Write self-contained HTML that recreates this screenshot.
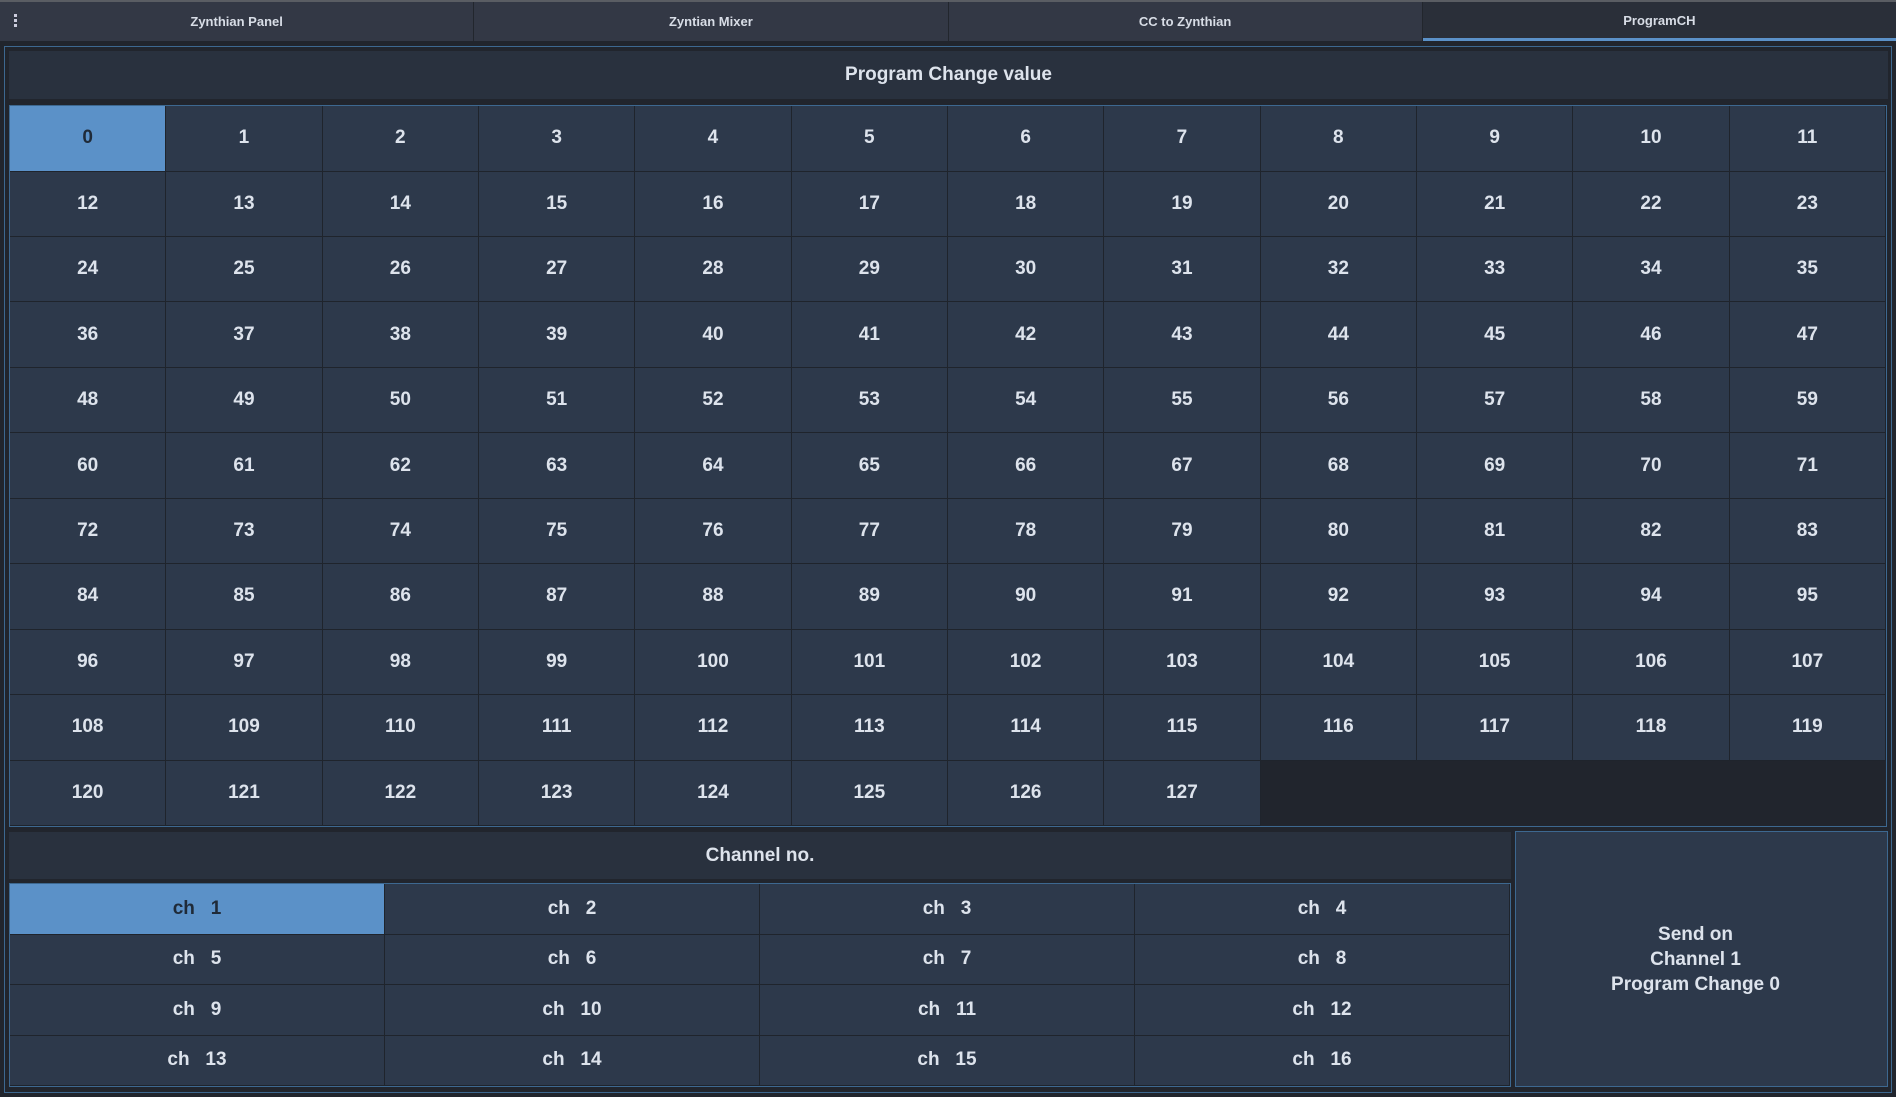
<!DOCTYPE html>
<html><head><meta charset="utf-8"><style>
*{box-sizing:border-box;margin:0;padding:0}
body{width:1896px;height:1097px;background:#21252d;font-family:"Liberation Sans",sans-serif;color:#dde3ec;position:relative;overflow:hidden}
.tabs{position:absolute;left:0;top:0;width:1896px;height:41px;border-top:2px solid #5a5d63;background:#333845;display:flex}
.tab{flex:1;display:flex;align-items:center;justify-content:center;font-size:13px;font-weight:bold;border-right:1px solid #22262d;color:#d8dde6}
.tab.act{background:#2a2f39;border-bottom:3px solid #5b91c8;border-right:none}
.dots{position:absolute;left:14px;top:14px;width:3px}
.dots i{display:block;width:3px;height:3px;background:#ccd;margin-bottom:2px}
.frame{position:absolute;left:4px;top:46px;width:1888px;height:1047px;border:1px solid #3d6890}
.hdr{position:absolute;background:#29313e;display:flex;align-items:center;justify-content:center;font-weight:bold;font-size:19px}
.grid{position:absolute;left:9px;top:105px;width:1878px;height:722px;border:1px solid #3d6890;background:#21252d}
.c{position:absolute;background:#2d394b;border-right:1px solid #1f242c;border-bottom:1px solid #1f242c;display:flex;align-items:center;justify-content:center;font-weight:bold;font-size:19px}
.c.sel{background:#5b91c8;color:#1f2a38}
.send{position:absolute;left:1515px;top:831px;width:373px;height:256px;border:1px solid #3d6890;background:#2d394b;display:flex;align-items:center;justify-content:center;text-align:center;font-weight:bold;font-size:19px;line-height:25px;padding-right:12px}
.chg{position:absolute;left:9px;top:883px;width:1502px;height:204px;border:1px solid #3d6890;background:#21252d}
</style></head><body>
<div class="tabs">
<div class="tab">Zynthian Panel</div><div class="tab">Zyntian Mixer</div><div class="tab">CC to Zynthian</div><div class="tab act">ProgramCH</div>
</div>
<div class="dots"><i></i><i></i><i></i></div>
<div class="frame"></div>
<div class="hdr" style="left:9px;top:51px;width:1879px;height:48px">Program Change value</div>
<div class="grid" id="g"></div>
<div class="hdr" style="left:9px;top:832px;width:1502px;height:47px">Channel no.</div>
<div class="chg" id="ch"></div>
<div class="send">Send on<br>Channel 1<br>Program Change 0</div>
<script>
var g=document.getElementById('g'),h='';
var cw=1876/12,rh=720/11;
for(var i=0;i<128;i++){var r=Math.floor(i/12),c=i%12;
h+='<div class="c'+(i==0?' sel':'')+'" style="left:'+(c*cw).toFixed(1)+'px;top:'+(r*rh).toFixed(1)+'px;width:'+cw.toFixed(1)+'px;height:'+rh.toFixed(1)+'px">'+i+'</div>';}
g.innerHTML=h;
var ch=document.getElementById('ch');h='';
var w=1500/4,hh=202/4;
for(var i=0;i<16;i++){var r=Math.floor(i/4),c=i%4;
h+='<div class="c'+(i==0?' sel':'')+'" style="left:'+(c*w)+'px;top:'+(r*hh)+'px;width:'+w+'px;height:'+hh+'px">ch&nbsp;&nbsp;&nbsp;'+(i+1)+'</div>';}
ch.innerHTML=h;
</script>
</body></html>
